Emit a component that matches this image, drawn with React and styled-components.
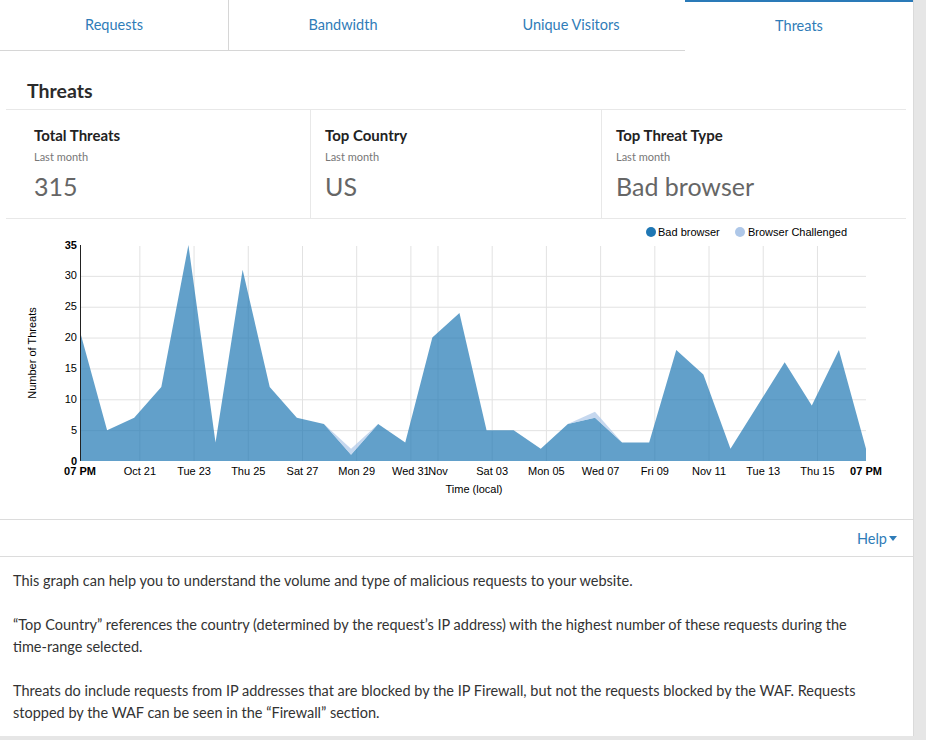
import React from "react"
import styled, { createGlobalStyle } from "styled-components"

const GlobalStyle = createGlobalStyle`
    body {
        margin: 0;
        background: #e6e6e6;
        font-family: Lato, "Noto Sans", sans-serif;
        color: #333;
    }
`

const Panel = styled.div`
    width: 913px;
    background: #fff;
    border-right: 1px solid #dadada;
`

const TabBar = styled.div`
    display: flex;
    height: 51px;
`

const Tab = styled.div`
    flex: 1;
    display: flex;
    align-items: center;
    justify-content: center;
    padding-bottom: ${({ $active }) => ($active ? "2px" : "1px")};
    font-size: 14.5px;
    color: #2f7cb8;
    box-sizing: border-box;
    border-bottom: ${({ $active }) => ($active ? "none" : "1px solid #d6d6d6")};
    border-top: ${({ $active }) => ($active ? "2px solid #2a7ab8" : "none")};
    border-right: ${({ $divider }) => ($divider ? "1px solid #d6d6d6" : "none")};
    cursor: pointer;
`

const Section = styled.div`
    padding: 0 7px 0 6px;
`

const Heading = styled.h2`
    margin: 0;
    height: 58px;
    display: flex;
    align-items: center;
    padding: 20px 0 0 21px;
    box-sizing: border-box;
    font-size: 19.5px;
    font-weight: 700;
    color: #2b2b2b;
`

const StatsRow = styled.div`
    display: grid;
    grid-template-columns: 304px 291px 1fr;
    border-top: 1px solid #e8e8e8;
    border-bottom: 1px solid #e8e8e8;
    height: 110px;
    box-sizing: border-box;
`

const Stat = styled.div`
    padding: 15px 0 0 ${({ $pad }) => $pad}px;
    border-left: ${({ $first }) => ($first ? "none" : "1px solid #e8e8e8")};
`

const StatTitle = styled.div`
    font-size: 15px;
    font-weight: 700;
    color: #222;
    line-height: 20px;
`

const StatSub = styled.div`
    font-size: 11px;
    color: #777;
    margin-top: 5px;
    line-height: 14px;
`

const StatValue = styled.div`
    font-size: 25px;
    color: #666;
    line-height: 30px;
    margin-top: 7px;
`

const ChartSvg = styled.svg`
    display: block;
    font-family: "Liberation Sans", Arial, sans-serif;
    font-size: 11px;
`

const HelpBar = styled.div`
    display: flex;
    justify-content: flex-end;
    align-items: center;
    height: 38px;
    box-sizing: border-box;
    border-top: 1px solid #dcdcdc;
    border-bottom: 1px solid #dcdcdc;
    padding-right: 16px;
`

const HelpToggle = styled.span`
    display: flex;
    align-items: center;
    font-size: 14.5px;
    color: #2f7cb8;
    cursor: pointer;

    &::after {
        content: "";
        margin-left: 2px;
        border-left: 4px solid transparent;
        border-right: 4px solid transparent;
        border-top: 5px solid #2f7cb8;
    }
`

const HelpText = styled.div`
    padding: 13px 13px 12px 13px;
    font-size: 14.5px;
    line-height: 22px;
    color: #333;

    p {
        margin: 0 0 22px;
    }
    p:last-child {
        margin-bottom: 0;
    }
`

const NoWrap = styled.span`
    white-space: nowrap;
`

const bad = [21, 5, 7, 12, 35, 3, 31, 12, 7, 6, 1, 6, 3, 20, 24, 5, 5, 2, 6, 7, 3, 3, 18, 14, 2, 9, 16, 9, 18, 2]
const challenged = bad.map((_, i) => (i === 10 || i === 19 ? 1 : 0))

const X0 = 80
const X1 = 866
const Y0 = 461
const YTOP = 245
const dx = (X1 - X0) / 29
const ky = (Y0 - YTOP) / 35
const px = (d) => X0 + d * dx
const py = (v) => Y0 - v * ky

const dateTicks = [
    [2, "Oct 21"], [4, "Tue 23"], [6, "Thu 25"], [8, "Sat 27"], [10, "Mon 29"],
    [12, "Wed 31"], [13, "Nov"], [15, "Sat 03"], [17, "Mon 05"], [19, "Wed 07"],
    [21, "Fri 09"], [23, "Nov 11"], [25, "Tue 13"], [27, "Thu 15"],
].map(([d, label]) => ({ x: px(d + 5 / 24), label }))

const yTicks = [0, 5, 10, 15, 20, 25, 30, 35]

function ThreatChart() {
    const badTop = bad.map((v, i) => `${px(i)},${py(v)}`).join(" ")
    const badArea = `${X0},${Y0} ${badTop} ${X1},${Y0}`
    const chTop = bad.map((v, i) => `${px(i)},${py(v + challenged[i])}`)
    const chBottom = bad.map((v, i) => `${px(i)},${py(v)}`).reverse()
    const chArea = [...chTop, ...chBottom].join(" ")

    return (
        <ChartSvg width="900" height="300" viewBox="6 219 900 300">
            {/* grid */}
            {dateTicks.map((t) => (
                <line key={t.label} x1={t.x} x2={t.x} y1={246} y2={Y0} stroke="#e2e2e2" />
            ))}
            {yTicks.slice(1, -1).map((v) => (
                <line key={v} x1={X0} x2={X1} y1={py(v) + 0.5} y2={py(v) + 0.5} stroke="#e2e2e2" />
            ))}

            <polygon points={badArea} fill="#1f77b4" fillOpacity="0.7" />
            <polygon points={chArea} fill="#aec7e8" fillOpacity="0.7" />

            <line x1={X0 + 0.5} x2={X0 + 0.5} y1={YTOP} y2={Y0} stroke="#222" />

            {yTicks.map((v) => (
                <text
                    key={v}
                    x={77}
                    y={py(v)}
                    dy=".32em"
                    textAnchor="end"
                    fontWeight={v === 0 || v === 35 ? 700 : 400}
                    fill="#000"
                >
                    {v}
                </text>
            ))}

            {dateTicks.map((t) => (
                <text key={t.label} x={t.x} y={475} textAnchor="middle" fill="#000">
                    {t.label}
                </text>
            ))}
            <text x={X0} y={475} textAnchor="middle" fontWeight="700" fill="#000">07 PM</text>
            <text x={X1} y={475} textAnchor="middle" fontWeight="700" fill="#000">07 PM</text>

            <text x={474} y={493} textAnchor="middle" fill="#000">Time (local)</text>
            <text x={0} y={0} transform="translate(36 353) rotate(-90)" textAnchor="middle" fill="#000">
                Number of Threats
            </text>

            {/* legend */}
            <circle cx={651} cy={232} r={5} fill="#1f77b4" />
            <text x={658} y={232} dy=".32em" fill="#000">Bad browser</text>
            <circle cx={740} cy={232} r={5} fill="#aec7e8" />
            <text x={748} y={232} dy=".32em" fill="#000">Browser Challenged</text>
        </ChartSvg>
    )
}

const stats = [
    { title: "Total Threats", value: "315", pad: 28 },
    { title: "Top Country", value: "US", pad: 14 },
    { title: "Top Threat Type", value: "Bad browser", pad: 14 },
]

export default function App() {
    const tabs = ["Requests", "Bandwidth", "Unique Visitors", "Threats"]
    return (
        <>
            <GlobalStyle />
            <Panel>
                <TabBar>
                    {tabs.map((t, i) => (
                        <Tab key={t} $active={t === "Threats"} $divider={i === 0}>
                            {t}
                        </Tab>
                    ))}
                </TabBar>
                <Section>
                    <Heading>Threats</Heading>
                    <StatsRow>
                        {stats.map((s, i) => (
                            <Stat key={s.title} $pad={s.pad} $first={i === 0}>
                                <StatTitle>{s.title}</StatTitle>
                                <StatSub>Last month</StatSub>
                                <StatValue>{s.value}</StatValue>
                            </Stat>
                        ))}
                    </StatsRow>
                    <ThreatChart />
                </Section>
                <HelpBar>
                    <HelpToggle>Help</HelpToggle>
                </HelpBar>
                <HelpText>
                    <p>This graph can help you to understand the volume and type of malicious requests to your website.</p>
                    <p>
                        “Top Country” references the country (determined by the request’s IP address) with the highest
                        number of these requests during the <NoWrap>time-range</NoWrap> selected.
                    </p>
                    <p>
                        Threats do include requests from IP addresses that are blocked by the IP Firewall, but not the
                        requests blocked by the WAF. Requests stopped by the WAF can be seen in the “Firewall” section.
                    </p>
                </HelpText>
            </Panel>
        </>
    )
}
